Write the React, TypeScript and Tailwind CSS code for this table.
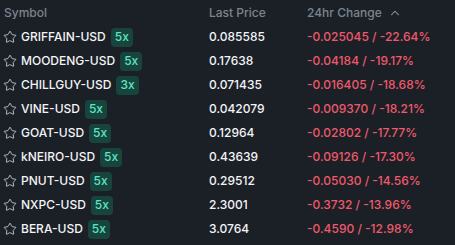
import { Star, ChevronUp } from "lucide-react";

type Row = { symbol: string; lev: string; price: string; change: string; pct: string };

const rows: Row[] = [
  { symbol: "GRIFFAIN-USD", lev: "5x", price: "0.085585", change: "-0.025045", pct: "-22.64%" },
  { symbol: "MOODENG-USD", lev: "5x", price: "0.17638", change: "-0.04184", pct: "-19.17%" },
  { symbol: "CHILLGUY-USD", lev: "3x", price: "0.071435", change: "-0.016405", pct: "-18.68%" },
  { symbol: "VINE-USD", lev: "5x", price: "0.042079", change: "-0.009370", pct: "-18.21%" },
  { symbol: "GOAT-USD", lev: "5x", price: "0.12964", change: "-0.02802", pct: "-17.77%" },
  { symbol: "kNEIRO-USD", lev: "5x", price: "0.43639", change: "-0.09126", pct: "-17.30%" },
  { symbol: "PNUT-USD", lev: "5x", price: "0.29512", change: "-0.05030", pct: "-14.56%" },
  { symbol: "NXPC-USD", lev: "5x", price: "2.3001", change: "-0.3732", pct: "-13.96%" },
  { symbol: "BERA-USD", lev: "5x", price: "3.0764", change: "-0.4590", pct: "-12.98%" },
];

export default function App() {
  return (
    <div
      className="w-[455px] h-[245px] bg-[#1b2027] overflow-hidden text-[12px] leading-none font-medium"
      style={{ fontFamily: "Inter, 'Noto Sans', sans-serif" }}
    >
      <div className="grid grid-cols-[205px_98px_1fr] items-center h-[25px] pl-1 text-[#7d848c]">
        <span>Symbol</span>
        <span>Last Price</span>
        <span className="flex items-center gap-1.5">
          24hr Change
          <ChevronUp size={14} strokeWidth={1.8} className="text-[#9aa0a6]" />
        </span>
      </div>
      {rows.map((r) => (
        <div key={r.symbol} className="grid grid-cols-[205px_98px_1fr] items-center h-6 pl-1">
          <div className="flex items-center">
            <Star size={14} strokeWidth={1.5} className="text-[#c9cdd2] -ml-px" />
            <span className="ml-1 text-[#f3f4f6]">{r.symbol}</span>
            <span className="ml-[5px] h-[19px] px-1 flex items-center rounded bg-[#17453d] text-[#5fe3c4]">
              {r.lev}
            </span>
          </div>
          <span className="text-[#f3f4f6]">{r.price}</span>
          <span className="text-[#f0596b]">
            {r.change} / {r.pct}
          </span>
        </div>
      ))}
    </div>
  );
}
